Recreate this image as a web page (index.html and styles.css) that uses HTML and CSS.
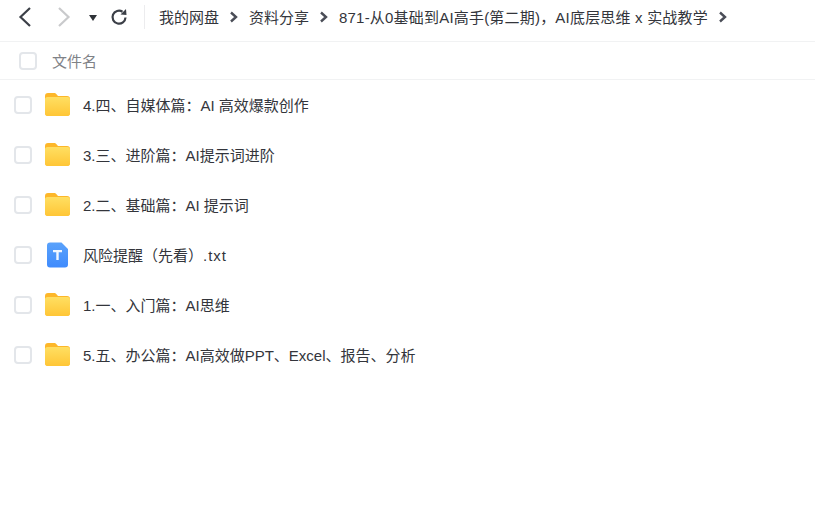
FILE: index.html
```html
<!DOCTYPE html>
<html lang="zh-CN">
<head>
  <meta charset="UTF-8" />
  <title>我的网盘</title>
  <link rel="stylesheet" href="styles.css">
</head>
<body>
  <svg width="0" height="0" class="defs">
    <defs>
      <linearGradient id="folderBody" x1="0" y1="0" x2="0" y2="1">
        <stop offset="0" stop-color="#ffdf62"/>
        <stop offset="1" stop-color="#ffc636"/>
      </linearGradient>
      <linearGradient id="txtBody" x1="0" y1="0" x2="0" y2="1">
        <stop offset="0" stop-color="#5aa2fb"/>
        <stop offset="1" stop-color="#3f8bfd"/>
      </linearGradient>
    </defs>
    <symbol id="folder" viewBox="0 0 25 23">
      <path d="M0 3a3 3 0 0 1 3-3h6c1.200 0 1.800.5 2.500 1.300L13 3h9a3 3 0 0 1 3 3v14a3 3 0 0 1-3 3H3a3 3 0 0 1-3-3z" fill="#fdb72a"/>
      <path d="M0 6.500A2.500 2.500 0 0 1 2.500 4h20A2.500 2.500 0 0 1 25 6.500V20a3 3 0 0 1-3 3H3a3 3 0 0 1-3-3z" fill="url(#folderBody)"/>
    </symbol>
    <symbol id="sep" viewBox="0 0 10 12">
      <path d="M2 1.500 7 6 2 10.500" fill="none" stroke="#4a4d57" stroke-width="2.400"/>
    </symbol>
  </svg>

  <div class="toolbar">
    <svg class="nav-back" width="16" height="22" viewBox="0 0 16 22"><path d="M13 2 3.500 11 13 20" fill="none" stroke="#3b3f47" stroke-width="2.200"/></svg>
    <svg class="nav-forward" width="16" height="22" viewBox="0 0 16 22"><path d="M3 2 12.500 11 3 20" fill="none" stroke="#c9cacc" stroke-width="2.200"/></svg>
    <span class="nav-down"></span>
    <svg class="nav-refresh" width="18" height="18" viewBox="0 0 18 18"><path d="M15.500 9.500A6.500 6.500 0 1 1 12.500 3.700" fill="none" stroke="#3b3f47" stroke-width="2.200"/><path d="M10.500 6.500 16.500 7 16 1z" fill="#3b3f47"/></svg>
    <div class="toolbar-line"></div>
    <div class="crumbs">
      <span>我的网盘</span>
      <svg class="sep"><use href="#sep"/></svg>
      <span>资料分享</span>
      <svg class="sep"><use href="#sep"/></svg>
      <span class="crumb-long">871-从0基础到AI高手(第二期)，AI底层思维 x 实战教学</span>
      <svg class="sep"><use href="#sep"/></svg>
    </div>
  </div>

  <div class="list-head">
    <span class="check head-check"></span>
    <span class="head-name">文件名</span>
  </div>

  <div class="list">
    <div class="row"><span class="check"></span><svg class="folder"><use href="#folder"/></svg><span class="name">4.四、自媒体篇：AI 高效爆款创作</span></div>
    <div class="row"><span class="check"></span><svg class="folder"><use href="#folder"/></svg><span class="name">3.三、进阶篇：AI提示词进阶</span></div>
    <div class="row"><span class="check"></span><svg class="folder"><use href="#folder"/></svg><span class="name">2.二、基础篇：AI 提示词</span></div>
    <div class="row">
      <span class="check"></span>
      <svg class="txt" width="25" height="26" viewBox="0 0 25 26">
        <path d="M5 .5h11.500L23 7v15.500a3 3 0 0 1-3 3H5a3 3 0 0 1-3-3v-19a3 3 0 0 1 3-3z" fill="url(#txtBody)"/>
        <path d="M8 8h9v2.200h-3.300V18h-2.400v-7.800H8z" fill="#f0f6ff"/>
      </svg>
      <span class="name">风险提醒（先看）<span class="ext">.txt</span></span>
    </div>
    <div class="row"><span class="check"></span><svg class="folder"><use href="#folder"/></svg><span class="name">1.一、入门篇：AI思维</span></div>
    <div class="row"><span class="check"></span><svg class="folder"><use href="#folder"/></svg><span class="name">5.五、办公篇：AI高效做PPT、Excel、报告、分析</span></div>
  </div>
</body>
</html>
```

FILE: styles.css
```css
* {
  box-sizing: border-box;
}

html, body {
  margin: 0;
  padding: 0;
  background-color: #fff;
  color: #33353b;
  font-family: "Liberation Sans", "Noto Sans CJK SC", sans-serif;
  font-size: 15px;
  overflow: hidden;
}

.defs {
  position: absolute;
}

.toolbar {
  display: flex;
  align-items: center;
  height: 42px;
  padding-left: 17px;
  padding-bottom: 8px;
  border-bottom: 1px solid #f1f2f3;
}

.nav-forward {
  margin-left: 23px;
}

.nav-down {
  width: 0;
  height: 0;
  margin-left: 17px;
  margin-top: 2px;
  border-left: 4px solid transparent;
  border-right: 4px solid transparent;
  border-top: 6px solid #2f3238;
}

.nav-refresh {
  margin-left: 13px;
}

.toolbar-line {
  width: 1px;
  height: 24px;
  margin-left: 16px;
  background-color: #ececee;
}

.crumbs {
  display: flex;
  align-items: center;
  margin-left: 14px;
  white-space: nowrap;
}

.crumb-long {
  letter-spacing: 0.2px;
}

.sep {
  width: 10px;
  height: 12px;
  margin: 0 10px;
}

.list-head {
  display: flex;
  align-items: center;
  height: 38px;
  border-bottom: 1px solid #f1f2f3;
  padding-left: 19px;
}

.check {
  display: block;
  flex: none;
  width: 18px;
  height: 18px;
  border: 2px solid #e3e6ea;
  border-radius: 4px;
  background-color: #fff;
}

.head-name {
  margin-left: 15px;
  color: #7f8287;
}

.list {
  display: flex;
  flex-direction: column;
}

.row {
  display: flex;
  align-items: center;
  height: 50px;
  padding-left: 14px;
  padding-bottom: 1px;
}

.folder {
  width: 25px;
  height: 23px;
  margin-left: 13px;
}

.txt {
  margin-left: 13px;
}

.name {
  margin-left: 13px;
  white-space: nowrap;
}

.ext {
  letter-spacing: 1px;
}
```
